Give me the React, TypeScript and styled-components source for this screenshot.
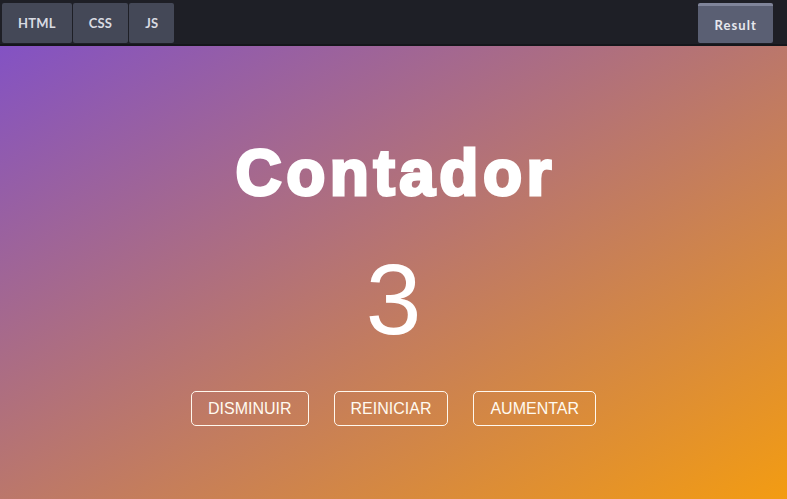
import React, { useState } from "react";
import styled, { createGlobalStyle } from "styled-components";

const GlobalStyle = createGlobalStyle`
  html, body { margin: 0; padding: 0; height: 100%; overflow: hidden; }
  body { background: #1e1f26; }
  #root { height: 100%; }
`;

const Page = styled.div`
  display: flex;
  flex-direction: column;
  width: 787px;
  height: 499px;
`;

const TopBar = styled.div`
  display: flex;
  align-items: flex-start;
  justify-content: space-between;
  height: 46px;
  padding: 3px 14px 0 2px;
  box-sizing: border-box;
  background: #1e1f26;
  border-bottom: 2px solid #15161b;
`;

const TabGroup = styled.div`
  display: flex;
  gap: 1px;
`;

const Tab = styled.div<{ $active?: boolean }>`
  height: 40px;
  box-sizing: border-box;
  padding: 0 16px;
  display: flex;
  align-items: center;
  font-family: Lato, "Open Sans", sans-serif;
  font-weight: 700;
  font-size: 13px;
  color: ${(p) => (p.$active ? "#e6e8ee" : "#d9dbe2")};
  background: ${(p) => (p.$active ? "#5a5f73" : "#444857")};
  border-top: ${(p) => (p.$active ? "3px solid #80859a" : "none")};
  border-radius: 2px;
  letter-spacing: ${(p) => (p.$active ? "1.1px" : "0.2px")};
`;

const Stage = styled.main`
  flex: 1;
  display: flex;
  flex-direction: column;
  align-items: center;
  padding-top: 95px;
  box-sizing: border-box;
  background: linear-gradient(to bottom right, #8352c4 0%, #f39c12 100%);
  color: #fff;
  font-family: "Liberation Sans", Arial, sans-serif;
`;

const Title = styled.h1`
  margin: 0;
  font-size: 64px;
  line-height: 64px;
  font-weight: 700;
  letter-spacing: 4.5px;
  padding-left: 4.5px;
  -webkit-text-stroke: 3px #fff;
`;

const Count = styled.div`
  margin-top: 44px;
  font-size: 100px;
  line-height: 100px;
  font-weight: 400;
`;

const Controls = styled.div`
  margin-top: 42px;
  display: flex;
  gap: 25px;
`;

const ActionButton = styled.button`
  background: transparent;
  border: 1px solid #fff8ee;
  border-radius: 5px;
  color: #fffaf0;
  font-family: "Liberation Sans", Arial, sans-serif;
  font-size: 16px;
  line-height: 17px;
  padding: 8px 16px;
  height: 35px;
  cursor: pointer;
`;

export default function App() {
  const [count, setCount] = useState(3);
  return (
    <>
      <GlobalStyle />
      <Page>
        <TopBar>
          <TabGroup>
            <Tab>HTML</Tab>
            <Tab>CSS</Tab>
            <Tab>JS</Tab>
          </TabGroup>
          <Tab $active>Result</Tab>
        </TopBar>
        <Stage>
          <Title>Contador</Title>
          <Count>{count}</Count>
          <Controls>
            <ActionButton onClick={() => setCount((c) => c - 1)}>DISMINUIR</ActionButton>
            <ActionButton onClick={() => setCount(0)}>REINICIAR</ActionButton>
            <ActionButton onClick={() => setCount((c) => c + 1)}>AUMENTAR</ActionButton>
          </Controls>
        </Stage>
      </Page>
    </>
  );
}
